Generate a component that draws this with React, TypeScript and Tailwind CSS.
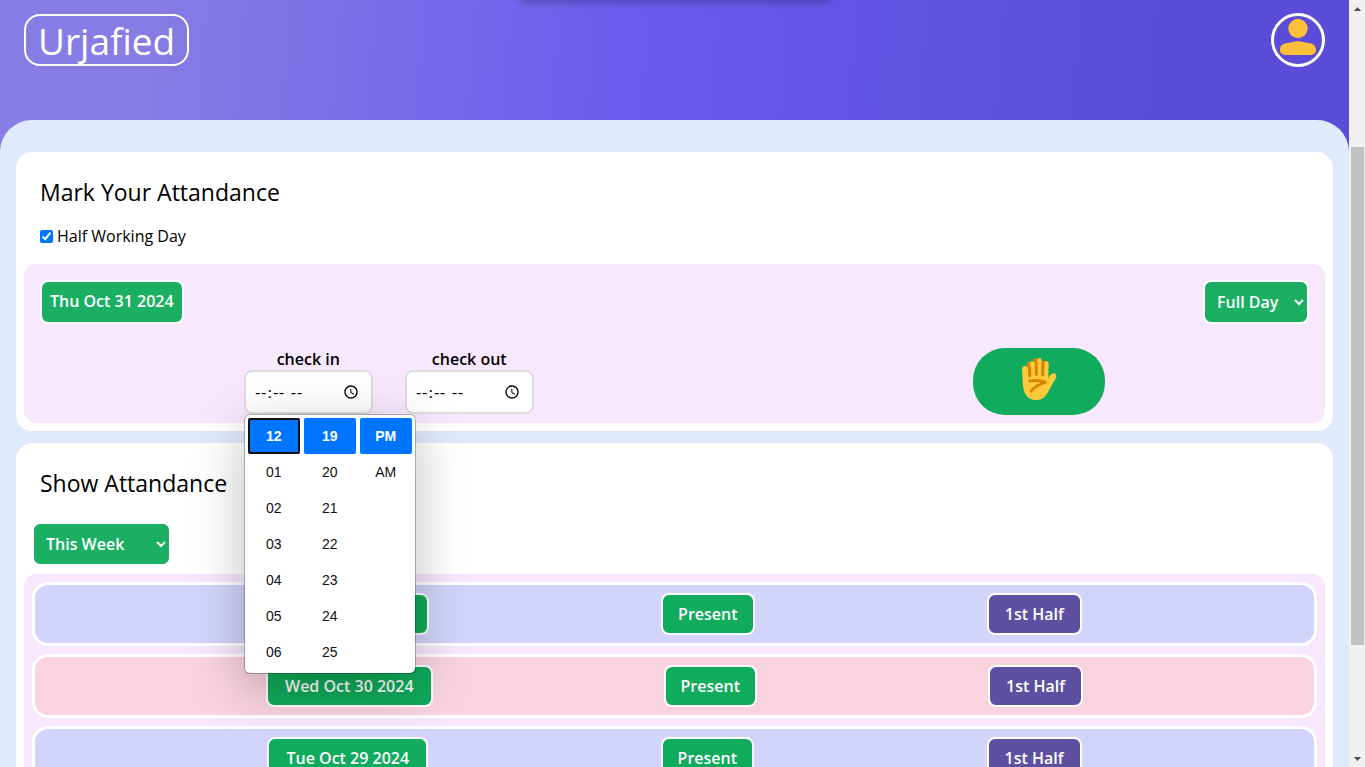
import { useState } from 'react';

const hours = ['12', '01', '02', '03', '04', '05', '06'];
const minutes = ['19', '20', '21', '22', '23', '24', '25'];
const periods = ['PM', 'AM'];

const records = [
  { date: 'Thu Oct 31 2024', status: 'Present', part: '1st Half' },
  { date: 'Wed Oct 30 2024', status: 'Present', part: '1st Half' },
  { date: 'Tue Oct 29 2024', status: 'Present', part: '1st Half' },
];

function UserIcon() {
  return (
    <svg viewBox="0 0 48 48" className="h-12 w-12 shrink-0" fill="#fbc037" aria-hidden="true">
      <circle cx="24" cy="12.5" r="9.7" />
      <path d="M6 33.800c0-3.600 2.400-6 6.200-6.500L24 25.100l11.800 2.200c3.800.5 6.200 2.900 6.200 6.500 0 3.200-2.200 5.200-5.500 5.200h-25C8.200 39 6 37 6 33.800z" />
    </svg>
  );
}

function HandIcon() {
  return (
    <svg viewBox="0 0 36 44" className="h-11 w-9" aria-hidden="true">
      <g fill="none" stroke="#d68308" strokeLinecap="round" strokeWidth="5">
        <path d="M8.400 7v14M15 3.500v16M22.200 6v14" />
      </g>
      <path
        fill="#ffc93c"
        d="M1 12.500C1 10 2.500 9 4.200 9S6.900 10.200 7 12l.6 7.200h1.800L8.800 8c-.1-2.500 1-3.800 2.600-3.800S13.800 5.600 13.900 7l.7 10.600h1.500L16.300 4c0-2 .9-3.100 2.100-3.100 1.500 0 2.200 1.200 2.200 2.900l.4 14.400h1.700l.8-12c.1-1.400 1-2.200 2-2.200 1.400 0 2.100 1.200 2.100 2.700l-.2 14.700c1.400-3 3-5.200 5.100-5.200 2.300 0 3.600 2 2.600 4.400-.8 2-2.300 3.800-3.700 6.300-2.200 4-4.300 8.600-6.900 11.800C22.200 41.600 19.200 43 15 43c-4.800 0-8.500-2-10.700-6C2.300 33.300 1.900 28.500 1.600 23z"
      />
      <g fill="none" stroke="#d68308" strokeLinecap="round" strokeLinejoin="round">
        <path strokeWidth="2.800" d="M8.900 10.500v8.500M15.300 7v10.500M21.800 8.500v9.500" />
        <path strokeWidth="2.900" d="M8.800 24c4.700-.7 10.700-.7 15.700 1.300-6 1.700-11.300 4.500-14.300 9" />
      </g>
    </svg>
  );
}

function PickerColumn({ values, label, focused }: { values: string[]; label: string; focused?: boolean }) {
  return (
    <div role="listbox" aria-label={label} className="flex w-[52px] flex-col">
      {values.map((value, i) => (
        <button
          key={value}
          type="button"
          role="option"
          aria-selected={i === 0}
          className={
            i === 0
              ? focused
                ? 'h-9 rounded-xs border-2 border-[#101010] bg-[#0075ff] font-bold text-white'
                : 'h-9 rounded-xs bg-[#0075ff] font-bold text-white'
              : 'h-9 text-[#101010]'
          }
        >
          {value}
        </button>
      ))}
    </div>
  );
}

function TimePicker() {
  return (
    <div className="absolute top-full left-0 z-10 flex gap-1 rounded-md border border-black/25 bg-white bg-clip-padding p-[3px] font-['Liberation_Sans',sans-serif] text-sm shadow-[0_14px_52px_rgba(0,0,0,0.26)]">
      <PickerColumn values={hours} label="Hours" focused />
      <PickerColumn values={minutes} label="Minutes" />
      <PickerColumn values={periods} label="AM/PM" />
    </div>
  );
}

function TimeField({ id, label, open }: { id: string; label: string; open?: boolean }) {
  return (
    <div className="relative flex flex-col">
      <label htmlFor={id} className="text-center leading-[22px] font-semibold">
        {label}
      </label>
      <input
        id={id}
        type="time"
        className="h-11 w-[129px] rounded-lg border-2 border-[#dddddd] bg-white px-2 font-['Lato',sans-serif] focus:outline-none"
      />
      {open && <TimePicker />}
    </div>
  );
}

const pillStyles = {
  date: 'rounded-lg border-2 border-white bg-[#10ab5c] px-[17px] py-[7px] font-semibold text-white',
  status: 'rounded-lg border-2 border-white bg-[#10ab5c] px-[15px] py-[7px] font-semibold text-white',
  part: 'rounded-lg border-2 border-white bg-[#5d50a3] px-4 py-[7px] font-semibold text-white',
};

function Pill({ text, kind }: { text: string; kind: keyof typeof pillStyles }) {
  return <span className={pillStyles[kind]}>{text}</span>;
}

function Scrollbar() {
  return (
    <div aria-hidden="true" className="flex w-4 shrink-0 flex-col items-center bg-[#f0f0f0]">
      <svg viewBox="0 0 16 17" className="h-[17px] w-4" fill="#505050">
        <path d="M5 11h7L8.500 7z" />
      </svg>
      <div className="flex min-h-0 w-[13px] flex-1 flex-col">
        <div className="flex-[130]" />
        <div className="flex-[498] bg-[#c1c1c1]" />
        <div className="flex-[105]" />
      </div>
      <svg viewBox="0 0 16 17" className="h-[17px] w-4" fill="#505050">
        <path d="M5 7h7l-3.500 4z" />
      </svg>
    </div>
  );
}

export default function App() {
  const [halfDay, setHalfDay] = useState(true);

  return (
    <div className="flex h-screen overflow-hidden font-['Open_Sans',sans-serif] text-base text-black">
      <div className="relative min-w-0 flex-1 overflow-hidden bg-[#dfeafb]">
        <div
          aria-hidden="true"
          className="absolute -top-2 left-1/2 h-2 w-[308px] -translate-x-1/2 shadow-[0_1px_8px_rgba(0,0,0,0.35)]"
        />
        <header className="flex h-[152px] items-start justify-between bg-[linear-gradient(95deg,#887de4_10%,#6c5bee_47%,#5a4bd9_85%)] px-6 pt-[13px]">
          <a
            href="#"
            className="mt-px flex h-[52px] items-center rounded-2xl border-2 border-white px-3 text-[37px] leading-none font-medium text-white"
          >
            Urjafied
          </a>
          <button
            type="button"
            aria-label="Profile"
            className="flex h-[54px] w-[54px] items-center justify-center rounded-full border-[3px] border-white"
          >
            <UserIcon />
          </button>
        </header>

        <main className="relative -mt-8 flex flex-col gap-3 rounded-t-[32px] bg-[#dfeafb] p-4 pt-8">
          <section className="rounded-2xl bg-white p-2">
            <div className="flex flex-col gap-4 px-4 pt-4 pb-4">
              <h2 className="text-[23px] leading-8 font-medium">Mark Your Attandance</h2>
              <label className="flex items-center gap-1">
                <input
                  type="checkbox"
                  checked={halfDay}
                  onChange={(e) => setHalfDay(e.target.checked)}
                  className="h-[13px] w-[13px]"
                />
                Half Working Day
              </label>
            </div>
            <div className="rounded-xl bg-[#f8e8fe] pt-4 pb-2">
              <div className="flex items-start justify-between px-4">
                <span className="rounded-lg border-2 border-white bg-[#1aaf62] px-2 pt-[7px] pb-[9px] font-semibold text-white">
                  Thu Oct 31 2024
                </span>
                <select
                  aria-label="Day type"
                  className="h-11 w-[106px] rounded-lg border-2 border-white bg-[#1aaf62] px-2 font-semibold text-white"
                >
                  <option>Full Day</option>
                  <option>1st Half</option>
                  <option>2nd Half</option>
                </select>
              </div>
              <div className="mt-6 flex items-start justify-around">
                <div className="flex gap-8">
                  <TimeField id="check-in" label="check in" open />
                  <TimeField id="check-out" label="check out" />
                </div>
                <button
                  type="button"
                  aria-label="Mark attendance"
                  className="flex h-[67px] w-[132px] items-start justify-center rounded-[32px] bg-[#10ab5c] pt-[9px]"
                >
                  <HandIcon />
                </button>
              </div>
            </div>
          </section>

          <section className="rounded-2xl bg-white p-2">
            <h2 className="px-4 pt-4 text-[23px] leading-8 font-medium">Show Attandance</h2>
            <div className="px-2 pt-[23px] pb-2">
              <select
                aria-label="Period"
                className="block h-11 w-[139px] rounded-lg border-2 border-white bg-[#1aaf62] px-2 font-semibold text-white"
              >
                <option>This Week</option>
                <option>This Month</option>
              </select>
            </div>
            <ul className="flex flex-col gap-2 rounded-xl bg-[#f8e8fe] p-2">
              {records.map((r) => (
                <li
                  key={r.date}
                  className="flex items-center justify-evenly rounded-2xl border-[3px] border-white bg-[#d2d4fb] py-2 even:bg-[#f9d3e0]"
                >
                  <Pill text={r.date} kind="date" />
                  <Pill text={r.status} kind="status" />
                  <Pill text={r.part} kind="part" />
                </li>
              ))}
            </ul>
          </section>
        </main>
      </div>
      <Scrollbar />
    </div>
  );
}
